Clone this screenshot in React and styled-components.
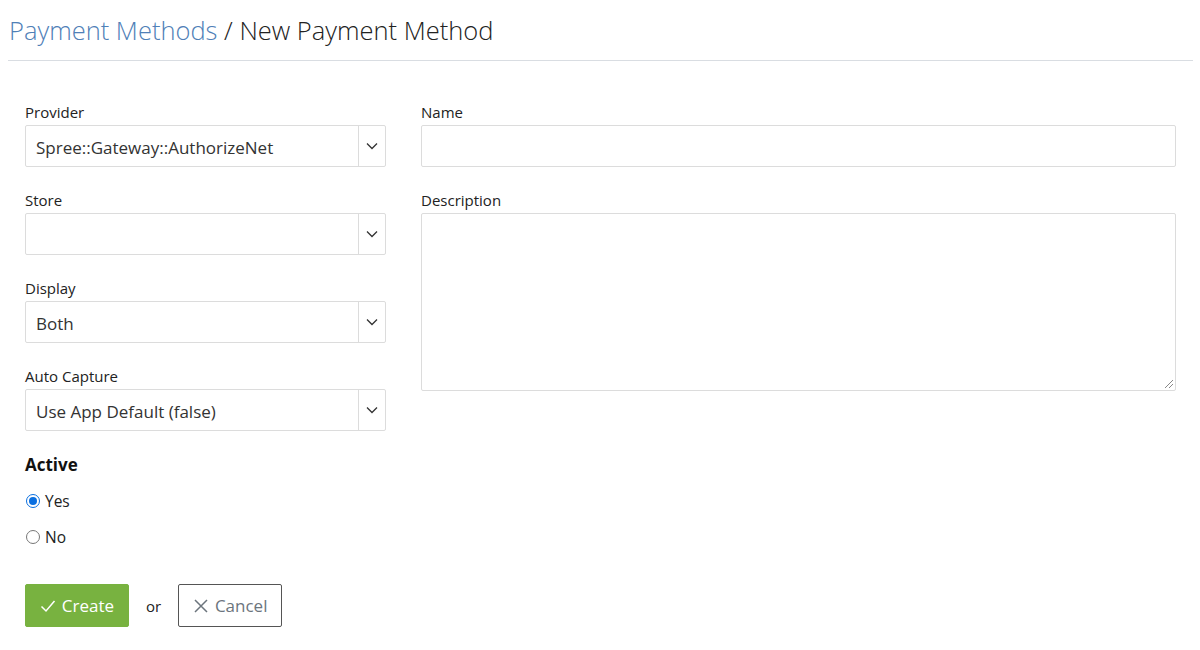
import React from 'react';
import styled, { createGlobalStyle } from 'styled-components';

const GlobalStyle = createGlobalStyle`
  body {
    margin: 0;
    background: #ffffff;
    font-family: "Open Sans", "Noto Sans", sans-serif;
    color: #212529;
  }
  * { box-sizing: border-box; }
`;

const Page = styled.div`
  width: 1200px;
  padding: 0 7px 0 8px;
`;

const Header = styled.div`
  padding: 12px 1px 12px;
  border-bottom: 1px solid #d9dde2;
`;

const Title = styled.h1`
  margin: 0;
  font-size: 25.5px;
  font-weight: 300;
  line-height: 36px;
  color: #222;
`;

const Crumb = styled.a`
  color: #4f80b7;
  text-decoration: none;
`;

const Form = styled.form`
  padding: 40px 17px 0;
`;

const Columns = styled.div`
  display: grid;
  grid-template-columns: 361px 1fr;
  column-gap: 35px;
`;

const Column = styled.div`
  display: flex;
  flex-direction: column;
`;

const Field = styled.div`
  margin-bottom: 22px;
`;

const Label = styled.label`
  display: block;
  font-size: 15px;
  line-height: 22px;
  margin-bottom: 2px;
  color: #222;
`;

const SelectBox = styled.div`
  display: flex;
  height: 42px;
  border: 1px solid #dcdcdc;
  border-radius: 2px;
  background: #fff;
`;

const SelectValue = styled.div`
  flex: 1;
  display: flex;
  align-items: center;
  padding: 3px 10px 0;
  font-size: 17px;
  color: #333;
`;

const Arrow = styled.div`
  width: 27px;
  border-left: 1px solid #dcdcdc;
  display: flex;
  align-items: center;
  justify-content: center;
`;

const TextInput = styled.div`
  height: 42px;
  border: 1px solid #dcdcdc;
  border-radius: 2px;
`;

const TextArea = styled.div`
  position: relative;
  height: 178px;
  border: 1px solid #dcdcdc;
  border-radius: 2px;
`;

const Grip = styled.svg`
  position: absolute;
  right: 1px;
  bottom: 1px;
`;

const Legend = styled.div`
  font-size: 17px;
  font-weight: 700;
  line-height: 22px;
  margin-top: 1px;
  color: #111;
`;

const RadioRow = styled.label`
  display: flex;
  align-items: center;
  gap: 5px;
  font-size: 15.5px;
  line-height: 22px;
  margin-top: ${(p) => p.$gap}px;
  color: #222;
`;

const Radio = styled.span`
  width: 14px;
  height: 14px;
  margin-left: 1px;
  border-radius: 50%;
  border: 1px solid ${(p) => (p.$checked ? '#0a6fe0' : '#777')};
  display: flex;
  align-items: center;
  justify-content: center;
  &::after {
    content: '';
    display: ${(p) => (p.$checked ? 'block' : 'none')};
    width: 8px;
    height: 8px;
    border-radius: 50%;
    background: #0a6fe0;
  }
`;

const Actions = styled.div`
  display: flex;
  align-items: center;
  gap: 17px;
  margin-top: 36px;
`;

const Button = styled.button`
  display: flex;
  align-items: center;
  justify-content: center;
  gap: 6px;
  width: 104px;
  height: 43px;
  padding: 0;
  font-family: inherit;
  font-size: 17px;
  border-radius: 2px;
  cursor: pointer;
`;

const CreateButton = styled(Button)`
  background: #78b240;
  border: 1px solid #78b240;
  color: #fff;
`;

const CancelButton = styled(Button)`
  background: #fff;
  border: 1px solid #555;
  color: #6c757d;
`;

const Or = styled.span`
  font-size: 15px;
  color: #222;
`;

const Chevron = () => (
  <svg width="12" height="8" viewBox="0 0 12 8">
    <path d="M1 1.5l5 5 5-5" fill="none" stroke="#333" strokeWidth="1.3" />
  </svg>
);

const Select = ({ value }) => (
  <SelectBox>
    <SelectValue>{value}</SelectValue>
    <Arrow>
      <Chevron />
    </Arrow>
  </SelectBox>
);

const App = () => {
  return (
    <Page>
      <GlobalStyle />
      <Header>
        <Title>
          <Crumb href="#">Payment Methods</Crumb> / New Payment Method
        </Title>
      </Header>
      <Form>
        <Columns>
          <Column>
            <Field>
              <Label>Provider</Label>
              <Select value="Spree::Gateway::AuthorizeNet" />
            </Field>
            <Field>
              <Label>Store</Label>
              <Select value="" />
            </Field>
            <Field>
              <Label>Display</Label>
              <Select value="Both" />
            </Field>
            <Field>
              <Label>Auto Capture</Label>
              <Select value="Use App Default (false)" />
            </Field>
          </Column>
          <Column>
            <Field>
              <Label>Name</Label>
              <TextInput />
            </Field>
            <Field>
              <Label>Description</Label>
              <TextArea>
                <Grip width="12" height="12" viewBox="0 0 12 12">
                  <path d="M11 3L3 11M11 7L7 11" stroke="#888" strokeWidth="1" />
                </Grip>
              </TextArea>
            </Field>
          </Column>
        </Columns>
        <Legend>Active</Legend>
        <RadioRow $gap={14}>
          <Radio $checked />
          Yes
        </RadioRow>
        <RadioRow $gap={14}>
          <Radio />
          No
        </RadioRow>
        <Actions>
          <CreateButton type="button">
            <svg width="16" height="14" viewBox="0 0 16 14">
              <path d="M1.5 7.5l4.5 4.5 8.5-10" fill="none" stroke="#fff" strokeWidth="1.5" />
            </svg>
            Create
          </CreateButton>
          <Or>or</Or>
          <CancelButton type="button">
            <svg width="16" height="16" viewBox="0 0 16 16">
              <path d="M2 2l12 12M14 2L2 14" fill="none" stroke="#6c757d" strokeWidth="1.5" />
            </svg>
            Cancel
          </CancelButton>
        </Actions>
      </Form>
    </Page>
  );
};

export default App;
